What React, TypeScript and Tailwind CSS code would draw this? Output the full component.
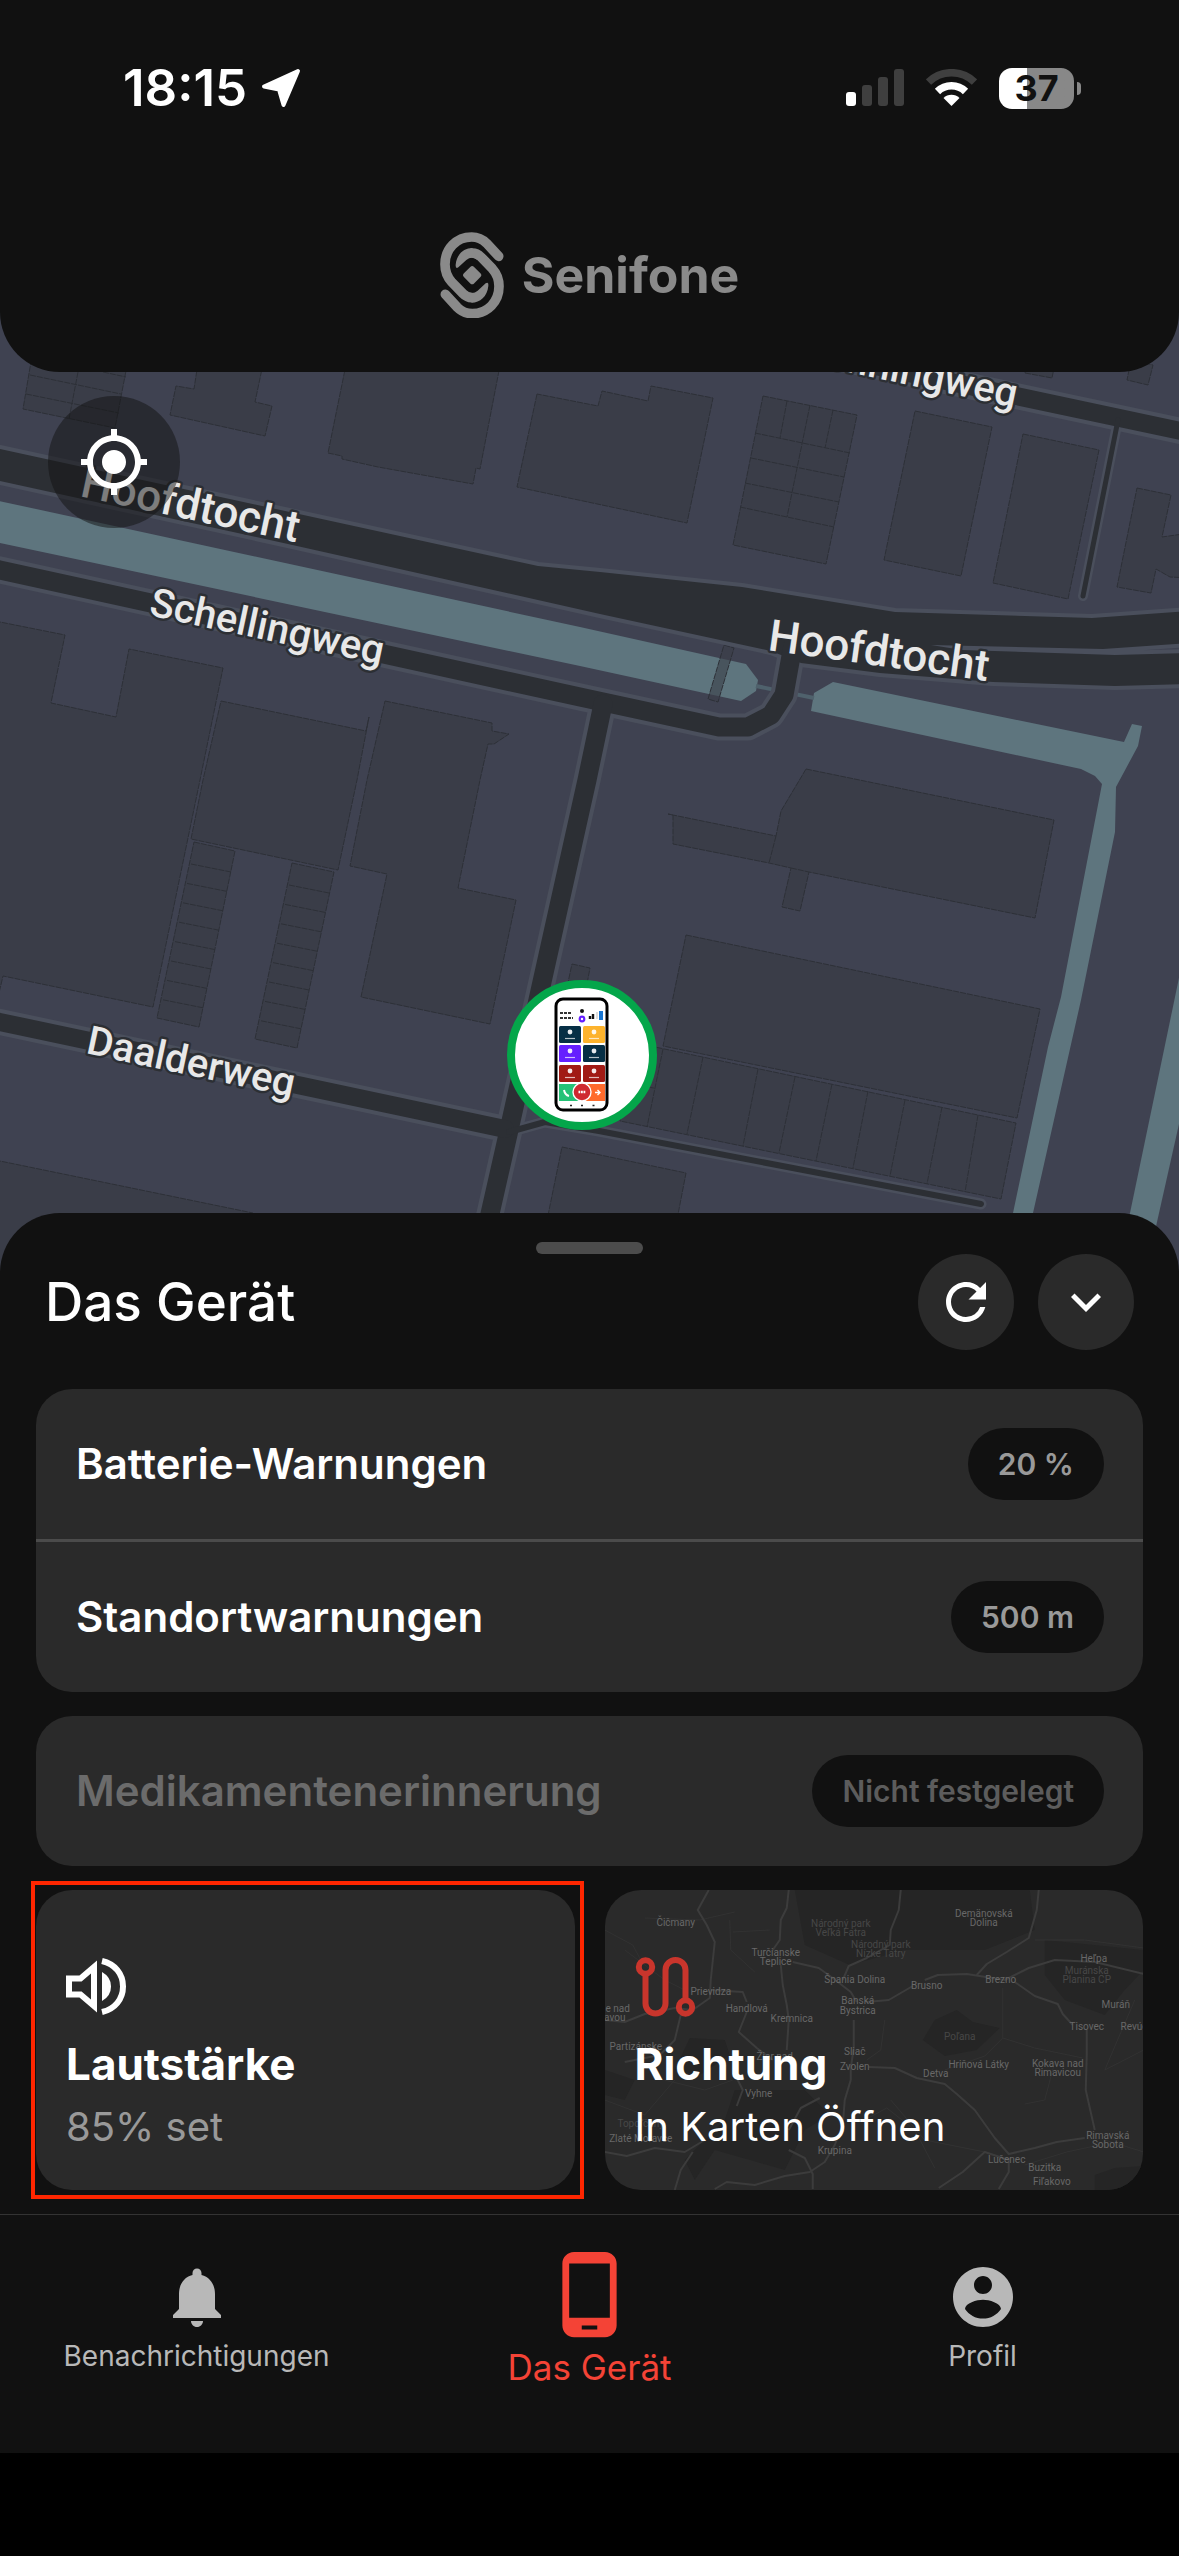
import React from 'react';

const BUILDINGS = [
  '33,350 130,350 115,428 23,409',
  '200,350 194,389 176,386 170,415 265,436 272,406 255,402 266,350',
  '349,350 328,453 342,456 342,459 378,467 473,484 476,468 480,469 503,350',
  '537,394 517,487 687,523 713,398 651,386 648,401 602,391 598,406',
  '763,396 857,415 826,564 733,545',
  '915,411 992,427 961,576 884,560',
  '1023,434 1099,450 1068,599 993,583',
  '1137,488 1171,495 1162,537 1190,533 1190,578 1170,577 1156,569 1151,593 1117,587',
  '1025,373 1052,378 1056,358 1029,352',
  '1131,360 1153,365 1148,385 1127,380',
  '-5,621 65,635 51,703 116,717 129,649 223,668 200,780 153,1007 3,976 -5,1010',
  '221,701 366,731 369,717 357,780 338,870 191,839 203,780',
  '385,701 492,723 492,731 509,734 494,744 488,744 480,780 458,888 516,900 490,1024 361,997 387,874 350,866 367,780',
  '194,842 235,851 199,1027 157,1018',
  '292,863 334,872 297,1048 255,1039',
  '-5,1160 253,1213 290,1290 -5,1290',
  '572,964 590,968 583,1005 564,1001',
  '562,1147 686,1173 675,1230 545,1230',
  '806,769 1054,820 1035,918 809,872 800,911 782,907 791,868 769,863 673,844 673,815 668,814 776,836 781,811',
  '686,935 1040,1009 1017,1118 663,1046',
  '636,1043 1016,1123 1001,1199 620,1121',
];

const BUILDING_LINES = [
  'M30,375 121,394 M26,394 119,413 M78,372 69,419 M103,372 126,377',
  'M755,433 850,453 M751,458 844,477 M745,483 839,502 M740,507 834,527',
  'M787,401 780,438 M810,405 787,517 M833,410 825,448',
  'M776,836 769,863 M791,868 809,872',
  'M663,1049 647,1127 M703,1057 687,1134 M758,1069 743,1146 M795,1077 779,1153 M832,1084 816,1161',
  'M868,1091 853,1168 M905,1100 890,1176 M942,1107 927,1184 M978,1115 965,1192 M648,1087 654,1088',
];

const STEPS = [0, 1, 2, 3, 4, 5, 6, 7];

const MAIN_ROAD =
  '-10,447 0,449 538,566 600,572 742,587 895,612 1092,618 1190,611 1190,643 1103,649 931,645 962,650 1115,655 1190,653 1190,684 1115,686 993,682 880,673 801,663 771,651 600,614 297,546 0,481 -10,479';

const ROADS = [
  { d: 'M-10,568 L0,570 L580,697 L719,727 L748,727 L771,715 L784,695 L793,645', width: 19 },
  { d: 'M603,704 L587,780 L509,1130 L475,1280', width: 19 },
  { d: 'M-10,1020 L0,1022 L505,1129', width: 18 },
  { d: 'M800,350 L1190,433', width: 18 },
  { d: 'M1118,420 L1083,596', width: 5 },
  { d: 'M509,1132 L545,1122 L599,1131 L981,1204', width: 6 },
];

const STREET_LABELS = [
  { text: 'Hoofdtocht', x: 79, y: 496, angle: 12, size: 'text-[44px]' },
  { text: 'Schellingweg', x: 148, y: 615, angle: 12, size: 'text-[40px]' },
  { text: 'Hoofdtocht', x: 767, y: 650, angle: 8, size: 'text-[44px]' },
  { text: 'Daalderweg', x: 85, y: 1053, angle: 12, size: 'text-[40px]' },
  { text: 'Henningweg', x: 796, y: 361, angle: 12, size: 'text-[40px]' },
];

const APP_TILES = [
  { x: 559, y: 1026, color: '#062f45' },
  { x: 583, y: 1026, color: '#fdb32c' },
  { x: 559, y: 1045, color: '#651fff' },
  { x: 583, y: 1045, color: '#062f45' },
  { x: 559, y: 1065, color: '#a11a14' },
  { x: 583, y: 1065, color: '#a11a14' },
];

const DeviceMarker: React.FC = () => (
  <g>
    <circle cx="582" cy="1055" r="71" fill="#fff" stroke="#04a64a" strokeWidth="8" />
    <rect x="556" y="999" width="51" height="111" rx="7" fill="#fff" stroke="#000" strokeWidth="3" />
    <path d="M560 1013h11M560 1018h13" stroke="#333" strokeWidth="2" strokeDasharray="3 1" />
    <circle cx="582" cy="1011" r="2" fill="#111" />
    <circle cx="582" cy="1019" r="3.4" fill="#651fff" />
    <circle cx="582" cy="1019" r="1.2" fill="#fff" />
    <path d="M590 1019v-3M593 1019v-5" stroke="#111" strokeWidth="2.4" />
    <path d="M597 1019v-7" stroke="#ddd" strokeWidth="2" />
    <rect x="599" y="1011" width="4" height="9" fill="#1976d2" />
    {APP_TILES.map((tile) => (
      <g key={`${tile.x}-${tile.y}`}>
        <rect x={tile.x} y={tile.y} width="22" height="17" rx="1.5" fill={tile.color} />
        <circle cx={tile.x + 11} cy={tile.y + 6} r="2.4" fill="#fff" opacity="0.9" />
        <path d={`M${tile.x + 6} ${tile.y + 12.5}h10`} stroke="#fff" strokeWidth="1.2" opacity="0.7" />
      </g>
    ))}
    <path d="M559 1084h23v17h-23z" fill="#25c277" />
    <path d="M582 1084h23v17h-23z" fill="#ff6b2c" />
    <path d="M564 1090q1 5 5 6" fill="none" stroke="#fff" strokeWidth="2" />
    <path d="M595 1092.500h5M597.500 1090l2.500 2.500-2.500 2.500" fill="none" stroke="#fff" strokeWidth="1.4" />
    <circle cx="582" cy="1092" r="9" fill="#cf2a30" stroke="#fff" strokeWidth="1.4" />
    <path d="M578.500 1092h7" stroke="#fff" strokeWidth="2.5" strokeDasharray="1.800 .7" />
    <path d="M570 1105.500h2M581 1105.500h2M592.500 1105.500h2" stroke="#222" strokeWidth="1.4" />
  </g>
);

const StreetMap: React.FC = () => (
  <svg className="block w-full h-[961px]" viewBox="0 312 1179 961" preserveAspectRatio="xMidYMid slice">
    <rect x="-600" y="312" width="2400" height="961" fill="#3f4251" />
    <g fill="#5e757e">
      <path d="M-10,499 L580,627 L746,664 L758,680 L756,691 L741,701 L580,666 L-10,541z" />
      <path d="M811,711 L814,693 L833,682 L1124,742 L1132,724 L1142,726 L1138,746 L1116,787 L1115,832 L1081,1000 L1033,1213 L1020,1280 L998,1280 L1013,1213 L1048,1047 L1061,997 L1102,784 L1095,776 L1081,769z" />
      <path d="M1190,925 L1130,1213 L1117,1280 L1144,1280 L1190,1075z" />
      <path d="M756,686 L814,698" stroke="#4f616c" strokeWidth="4" />
    </g>
    <g fill="#3a3d48" stroke="#2d3037" strokeWidth="1" strokeDasharray="6 1">
      {BUILDINGS.map((points) => (
        <polygon key={points} points={points} />
      ))}
      {BUILDING_LINES.map((d) => (
        <path key={d} d={d} />
      ))}
      {STEPS.map((i) => (
        <path
          key={i}
          d={`M${191 - i * 4},${864 + i * 19.4} l40,8 M${289 - i * 4},${885 + i * 19.4} l40,8`}
        />
      ))}
      <polygon points="724,645 734,648 718,702 708,699" fillOpacity="0.6" />
    </g>
    <g fill="none" stroke="#4a4f5c" strokeLinejoin="round" strokeLinecap="round">
      <polygon points={MAIN_ROAD} strokeWidth="8" />
      {ROADS.map((road) => (
        <path key={road.d} d={road.d} strokeWidth={road.width + (road.width > 10 ? 8 : 5)} />
      ))}
    </g>
    <g fill="none" stroke="#2c2f34" strokeLinejoin="round" strokeLinecap="round">
      <polygon points={MAIN_ROAD} fill="#2c2f34" stroke="none" />
      {ROADS.map((road) => (
        <path key={road.d} d={road.d} strokeWidth={road.width} />
      ))}
    </g>
    <g
      fill="#e8e8e8"
      stroke="#2c2f34"
      strokeWidth="5"
      strokeLinejoin="round"
      paintOrder="stroke"
      className="font-['Roboto',sans-serif] font-medium"
    >
      {STREET_LABELS.map((label) => (
        <text
          key={`${label.text}-${label.x}`}
          className={label.size}
          transform={`translate(${label.x} ${label.y}) rotate(${label.angle})`}
        >
          {label.text}
        </text>
      ))}
    </g>
    <DeviceMarker />
  </svg>
);

const REGION_ROADS = [
  'M104,0 L93,20 L102,35 L110,52 L106,90 L105,108 L88,120 M76,125 L70,150 L55,165 L20,172',
  'M184,0 L182,18 L176,30 L175,50 L168,60 M176,75 L178,95 L182,115 L184,130 L182,160',
  'M188,72 L214,78 L228,88 L246,102 L252,112',
  'M296,0 L294,20 L286,40 L285,55 L262,68 L244,76 L238,90',
  'M434,0 L432,20 L424,48 L402,62 L382,74 L372,85',
  'M246,190 L246,178 L249,158 L249,130 M262,112 L284,110 L308,96 M320,90 L333,85 L362,84 L400,90 L424,78 L450,70 L490,72 L539,84',
  'M410,92 L430,106 L453,114 L458,124 L468,135 M482,140 L482,165 L481,200 L490,240',
  'M264,177 L290,178 L312,188 L340,194 L352,204 L370,220 L390,248 L404,264 L430,258 L452,252 L480,248',
  'M246,190 L240,210 L238,235 L230,255 L220,272 L205,282 L180,286 L150,295 L122,292 L110,299',
  'M106,100 L138,102 L142,112 M142,122 L134,142 L152,158 L168,170 M128,180 L138,200 L132,216',
  'M0,262 L22,266 L50,258 L80,262 L100,250 M88,262 L76,280 L70,300',
  'M184,260 L200,268 L208,284 L208,299 M184,240 L196,218 L215,208',
  'M404,268 L404,282 L394,299 M404,270 L380,262 L358,282 L334,298',
  'M0,130 L20,132 L40,124 L70,118 L88,120',
];

const MINOR_ROADS = [
  'M0,40 L28,55 L36,70 M40,28 L95,30 L130,22 M125,30 L126,60 L150,82 M128,42 L165,40',
  'M398,98 L398,148 L380,166 L340,180 M398,148 L430,158 L478,168 M450,172 L440,210 L420,214',
  'M430,50 L480,50 L539,58 M530,110 L500,180 L539,160 M280,130 L276,160 L262,170',
  'M260,230 L282,218 L310,240 L330,278 M60,190 L100,200 L128,190 M0,210 L40,225 L70,190',
  'M500,250 L539,262 M490,256 L462,262 L420,275 M20,60 L60,90 L80,100 M286,210 L320,250 L380,262',
];

const TOWNS = [
  { x: 71, y: 36, name: 'Čičmany' },
  { x: 236, y: 37, name: 'Národný park', dim: true },
  { x: 236, y: 46, name: 'Veľká Fatra', dim: true },
  { x: 276, y: 58, name: 'Národný park', dim: true },
  { x: 276, y: 67, name: 'Nízke Tatry', dim: true },
  { x: 379, y: 27, name: 'Demänovská' },
  { x: 379, y: 36, name: 'Dolina' },
  { x: 171, y: 66, name: 'Turčianske' },
  { x: 171, y: 75, name: 'Teplice' },
  { x: 250, y: 93, name: 'Špania Dolina' },
  { x: 322, y: 99, name: 'Brusno' },
  { x: 396, y: 93, name: 'Brezno' },
  { x: 489, y: 72, name: 'Heľpa' },
  { x: 482, y: 84, name: 'Muránska', dim: true },
  { x: 482, y: 93, name: 'Planina CP', dim: true },
  { x: 511, y: 118, name: 'Muráň' },
  { x: 482, y: 140, name: 'Tisovec' },
  { x: 532, y: 140, name: 'Revúca' },
  { x: 106, y: 105, name: 'Prievidza' },
  { x: 142, y: 122, name: 'Handlová' },
  { x: 187, y: 132, name: 'Kremnica' },
  { x: 253, y: 114, name: 'Banská' },
  { x: 253, y: 124, name: 'Bystrica' },
  { x: 13, y: 122, name: 'e nad' },
  { x: 10, y: 131, name: 'avou' },
  { x: 31, y: 160, name: 'Partizánske' },
  { x: 170, y: 170, name: 'Žiar nad' },
  { x: 250, y: 165, name: 'Sliač' },
  { x: 250, y: 180, name: 'Zvolen' },
  { x: 355, y: 150, name: 'Poľana', dim: true },
  { x: 331, y: 187, name: 'Detva' },
  { x: 374, y: 178, name: 'Hriňová Látky' },
  { x: 453, y: 177, name: 'Kokava nad' },
  { x: 453, y: 186, name: 'Rimavicou' },
  { x: 154, y: 207, name: 'Vyhne' },
  { x: 230, y: 264, name: 'Krupina' },
  { x: 402, y: 273, name: 'Lučenec' },
  { x: 440, y: 281, name: 'Buzitka' },
  { x: 447, y: 295, name: 'Fiľakovo' },
  { x: 503, y: 249, name: 'Rimavská' },
  { x: 503, y: 258, name: 'Sobota' },
  { x: 36, y: 237, name: 'Topoľčany', dim: true },
  { x: 36, y: 252, name: 'Zlaté Moravce' },
];

const RegionMap: React.FC = () => (
  <svg className="absolute inset-0 w-full h-full" viewBox="0 0 539 300" preserveAspectRatio="xMidYMid slice">
    <g fill="#252525">
      <path d="M190,0 L425,0 L430,40 L380,60 L300,60 L245,75 L200,55z" />
      <path d="M440,50 L539,60 L539,80 L520,100 L500,125 L460,110 L440,85z" />
      <path d="M330,130 L352,120 L368,132 L395,138 L372,160 L340,166 L318,150z" />
      <path d="M85,148 L120,150 L125,165 L95,185 L70,180z M130,200 L200,200 L225,225 L200,240 L180,280 L110,260 L90,290 L80,270 L120,230z" />
      <path d="M490,285 L510,278 L539,276 L539,300 L490,300z M0,180 L30,190 L20,210 L0,205z" />
    </g>
    <g fill="none" stroke="#323232" strokeWidth="1">
      {MINOR_ROADS.map((d) => (
        <path key={d} d={d} />
      ))}
    </g>
    <g fill="none" stroke="#3c3c3c" strokeWidth="2" strokeLinejoin="round">
      {REGION_ROADS.map((d) => (
        <path key={d} d={d} />
      ))}
    </g>
    <g textAnchor="middle" className="font-['Roboto',sans-serif] text-[10px]">
      {TOWNS.map((town) => (
        <text key={`${town.name}-${town.y}`} x={town.x} y={town.y} fill={town.dim ? '#474747' : '#686868'}>
          {town.name}
        </text>
      ))}
    </g>
  </svg>
);

const StatusBar: React.FC = () => (
  <div className="flex items-center justify-between h-[60px] pl-[123px] pr-[98px]">
    <div className="flex items-center gap-3.5">
      <span className="text-[51px] leading-[60px] font-semibold text-white">18:15</span>
      <svg className="w-[40px] h-[40px]" viewBox="0 0 40 40">
        <path
          d="M37 3 L3 18.500 L18 21.500 L22.500 37z"
          fill="#fff"
          stroke="#fff"
          strokeWidth="4"
          strokeLinejoin="round"
        />
      </svg>
    </div>
    <div className="flex items-center gap-[22px]">
      <svg className="w-[58px] h-[38px]" viewBox="0 0 58 38">
        <rect x="0" y="23" width="10" height="14" rx="3" fill="#fff" />
        <g fill="#3f3f3f">
          <rect x="16" y="16" width="10" height="21" rx="3" />
          <rect x="32" y="8" width="10" height="29" rx="3" />
          <rect x="48" y="0" width="10" height="37" rx="3" />
        </g>
      </svg>
      <svg className="w-[51px] h-[38px]" viewBox="0 0 51 38" fill="none">
        <path d="M2.500 13 A33 33 0 0 1 48.500 13" stroke="#3f3f3f" strokeWidth="7.500" />
        <path d="M11.500 22.500 A20 20 0 0 1 39.500 22.500" stroke="#fff" strokeWidth="7.500" />
        <path d="M25.500 37 L17.500 29 A11.500 11.500 0 0 1 33.500 29z" fill="#fff" />
      </svg>
      <div className="flex items-center gap-[3px]">
        <div className="flex items-center justify-center w-[75px] h-[41px] rounded-[13px] bg-linear-to-r from-white from-[37%] to-[#888] to-[37%]">
          <span className="text-[36px] leading-[41px] font-bold text-[#111]">37</span>
        </div>
        <span className="w-1 h-[13px] rounded-r-full bg-[#888]" />
      </div>
    </div>
  </div>
);

const LogoHalf = () => (
  <>
    <path
      d="M203 101 L167 62 Q148 43 122 43 C76 43 42 79 42 125 C42 148 50 165 62 178 L96 213 Q108 225 122 225"
      fill="none"
      stroke="#8a8a8a"
      strokeWidth="29"
      strokeLinecap="round"
    />
    <path d="M108 205 Q124 217 140 204 L164 182 Q173 176 172 190 C169 222 147 240 122 240z" fill="#8a8a8a" />
  </>
);

const Logo: React.FC = () => (
  <div className="flex items-center justify-center gap-[18px]">
    <svg className="w-[64px] h-[86px]" viewBox="27 28 192 258">
      <LogoHalf />
      <g transform="rotate(180 123 158)">
        <LogoHalf />
      </g>
      <rect x="102" y="136" width="43" height="43" rx="8" transform="rotate(45 123.500 157.500)" fill="#8a8a8a" />
    </svg>
    <span className="text-[50px] leading-[60px] font-bold text-[#8a8a8a]">Senifone</span>
  </div>
);

interface SettingRowProps {
  label: string;
  value: string;
  disabled?: boolean;
}

const SettingRow: React.FC<SettingRowProps> = ({ label, value, disabled }) => (
  <div className="flex items-center justify-between py-[39px] pl-10 pr-[39px]">
    <span className={`text-[42px] leading-[48px] font-semibold ${disabled ? 'text-[#6b6b6b]' : 'text-white'}`}>
      {label}
    </span>
    <button
      disabled={disabled}
      className={`h-[72px] px-[30px] rounded-full bg-[#111111] text-[30px] font-semibold ${
        disabled ? 'text-[#5c5c5c]' : 'text-[#999999]'
      }`}
    >
      {value}
    </button>
  </div>
);

const VolumeIcon: React.FC = () => (
  <svg className="w-[60px] h-[72px]" viewBox="0 -7 60 72" fill="none" stroke="#fff">
    <path d="M3 21.500h11.500L28 10v39L14.500 37.500H3z" strokeWidth="6" />
    <path d="M36 15q9 5 9 14.500t-9 14.500z" fill="#fff" stroke="none" />
    <path d="M36 4C49 7 57 17 57 29.500S49 52 36 55" strokeWidth="6" />
  </svg>
);

const RouteIcon: React.FC = () => (
  <svg className="relative w-[61px] h-[72px]" viewBox="0 -7 61 72" fill="none" stroke="#c9352c" strokeWidth="6">
    <circle cx="10.500" cy="10" r="6.700" />
    <path d="M10.500 17V46.500a10 10 0 0 0 20 0V13a10 10 0 0 1 20 0V43" />
    <circle cx="50.500" cy="50" r="6.700" />
  </svg>
);

const NAV_ITEMS = [
  {
    label: 'Benachrichtigungen',
    path: 'M12 22c1.1 0 2-.9 2-2h-4c0 1.1.89 2 2 2zm6-6v-5c0-3.07-1.64-5.64-4.5-6.32V4c0-.83-.67-1.5-1.5-1.5s-1.5.67-1.5 1.5v.68C7.63 5.36 6 7.92 6 11v5l-2 2v1h16v-1l-2-2z',
  },
  {
    label: 'Das Gerät',
    active: true,
    path: 'M16 1H8C6.34 1 5 2.34 5 4v16c0 1.66 1.34 3 3 3h8c1.66 0 3-1.34 3-3V4c0-1.66-1.34-3-3-3zm-2 20h-4v-1h4v1zm3.25-3H6.75V4h10.5v14z',
  },
  {
    label: 'Profil',
    path: 'M12 2C6.48 2 2 6.48 2 12s4.48 10 10 10 10-4.48 10-10S17.520 2 12 2zm0 3c1.660 0 3 1.340 3 3s-1.340 3-3 3-3-1.340-3-3 1.340-3 3-3zm0 14.200c-2.500 0-4.710-1.280-6-3.220.03-1.990 4-3.080 6-3.080 1.990 0 5.970 1.090 6 3.080-1.290 1.940-3.500 3.220-6 3.220z',
  },
];

export default function App() {
  return (
    <div className="min-h-screen bg-black font-['Inter',sans-serif] text-white">
      <header className="relative z-10 bg-[#111111] rounded-b-[60px] pt-[58px] pb-[54px]">
        <StatusBar />
        <div className="mt-[114px]">
          <Logo />
        </div>
      </header>

      <section className="relative -my-[60px]">
        <StreetMap />
        <button
          aria-label="Standort"
          className="absolute left-12 top-[84px] flex items-center justify-center w-[132px] h-[132px] rounded-full bg-[#111111]/50"
        >
          <svg className="w-[72px] h-[72px]" viewBox="0 0 24 24" fill="#fff">
            <path d="M12 8c-2.21 0-4 1.79-4 4s1.790 4 4 4 4-1.790 4-4-1.790-4-4-4zm8.940 3A8.994 8.994 0 0 0 13 3.060V1h-2v2.060A8.994 8.994 0 0 0 3.060 11H1v2h2.060A8.994 8.994 0 0 0 11 20.940V23h2v-2.060A8.994 8.994 0 0 0 20.940 13H23v-2h-2.060zM12 19c-3.870 0-7-3.130-7-7s3.130-7 7-7 7 3.130 7 7-3.130 7-7 7z" />
          </svg>
        </button>
      </section>

      <main className="relative z-10 bg-[#111111] rounded-t-[60px] px-9 pt-[29px] pb-6">
        <div className="mx-auto w-[107px] h-3 rounded-full bg-[#4c4c4c]" />
        <div className="flex items-center justify-between px-[9px]">
          <h1 className="text-[53px] leading-[60px] font-medium">Das Gerät</h1>
          <div className="flex gap-6">
            <button aria-label="Aktualisieren" className="flex items-center justify-center w-24 h-24 rounded-full bg-[#2a2a2a]">
              <svg className="w-[60px] h-[60px]" viewBox="0 0 24 24" fill="#fff">
                <path d="M17.650 6.350A7.958 7.958 0 0 0 12 4c-4.420 0-7.990 3.580-7.990 8s3.570 8 7.990 8c3.730 0 6.840-2.550 7.730-6h-2.080A5.990 5.990 0 0 1 12 18c-3.310 0-6-2.690-6-6s2.690-6 6-6c1.660 0 3.140.69 4.220 1.780L13 11h7V4l-2.350 2.350z" />
              </svg>
            </button>
            <button aria-label="Einklappen" className="flex items-center justify-center w-24 h-24 rounded-full bg-[#2a2a2a]">
              <svg className="w-[60px] h-[60px]" viewBox="0 0 24 24" fill="#fff">
                <path d="M7.410 8.590 12 13.170l4.590-4.580L18 10l-6 6-6-6z" />
              </svg>
            </button>
          </div>
        </div>

        <div className="mt-[39px] rounded-[36px] bg-[#2a2a2a] divide-y-[3px] divide-[#4b4b4b]">
          <SettingRow label="Batterie-Warnungen" value="20 %" />
          <div>
            <SettingRow label="Standortwarnungen" value="500 m" />
          </div>
        </div>
        <div className="mt-6 rounded-[36px] bg-[#2a2a2a]">
          <SettingRow label="Medikamentenerinnerung" value="Nicht festgelegt" disabled />
        </div>

        <div className="mt-6 grid grid-cols-2 gap-[30px]">
          <div className="relative">
            <button className="flex flex-col items-start w-full h-[300px] rounded-[36px] bg-[#2a2a2a] px-[30px] pt-[60px]">
              <VolumeIcon />
              <span className="mt-[18px] text-[44px] leading-[48px] font-bold">Lautstärke</span>
              <span className="mt-[15px] text-[40px] leading-[48px] text-[#999999]">85% set</span>
            </button>
            <div className="absolute -left-[5px] -right-[9px] -inset-y-[9px] border-4 border-[#ff2600] pointer-events-none" />
          </div>
          <button className="relative flex flex-col items-start w-full h-[300px] overflow-hidden rounded-[36px] bg-[#2a2a2a] px-[30px] pt-[60px]">
            <RegionMap />
            <RouteIcon />
            <span className="relative mt-[18px] text-[44px] leading-[48px] font-bold">Richtung</span>
            <span className="relative mt-[15px] text-[40px] leading-[48px]">In Karten Öffnen</span>
          </button>
        </div>
      </main>

      <nav className="relative grid grid-cols-3 items-center h-[239px] pt-8 pb-[66px] border-t border-[#333333] bg-[#111111]">
        {NAV_ITEMS.map((item) => (
          <a
            key={item.label}
            href="#"
            className={`flex flex-col items-center gap-1.5 ${item.active ? 'text-[#f44336]' : 'text-[#b8b8b8]'}`}
          >
            <svg
              className={item.active ? 'w-[93px] h-[93px]' : 'w-[72px] h-[72px]'}
              viewBox="0 0 24 24"
              fill="currentColor"
            >
              <path d={item.path} />
            </svg>
            <span className={item.active ? 'text-[35px] leading-[40px]' : 'text-[28px] leading-[34px]'}>{item.label}</span>
          </a>
        ))}
      </nav>
    </div>
  );
}
